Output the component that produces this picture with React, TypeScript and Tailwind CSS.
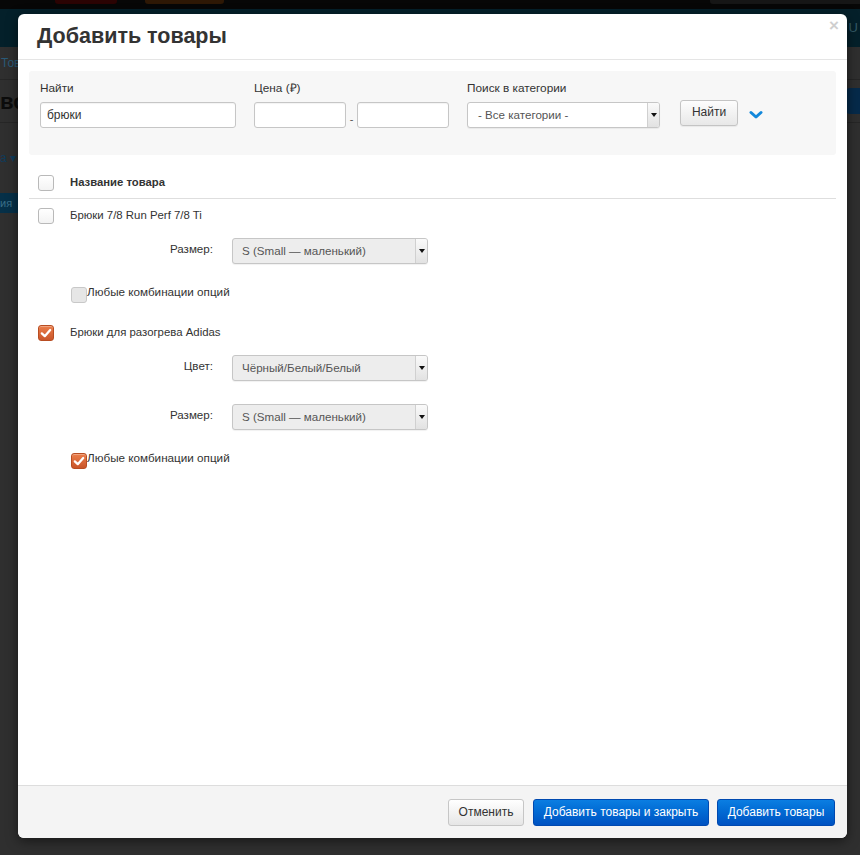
import React from 'react'

const font = { fontFamily: '"Liberation Sans", Arial, sans-serif' }

function Box({ checked, disabled }: { checked?: boolean; disabled?: boolean }) {
  if (checked) {
    return (
      <span className="flex h-4 w-4 shrink-0 items-center justify-center rounded-[3px] border border-[#b84d22] bg-gradient-to-b from-[#ec7e4a] to-[#c9552a] shadow-[inset_0_1px_0_rgba(255,255,255,0.3)]">
        <svg width="14" height="14" viewBox="0 0 16 16">
          <polyline points="3.2 8.4 6.6 11.6 12.8 4.6" fill="none" stroke="#fff" strokeWidth="2.6" strokeLinecap="round" strokeLinejoin="round" />
        </svg>
      </span>
    )
  }
  return (
    <span
      className={`block h-4 w-4 shrink-0 rounded-[3px] border ${
        disabled ? 'border-[#c8c8c8] bg-[#e6e6e6]' : 'border-[#b9b9b9] bg-gradient-to-b from-white to-[#f3f3f3]'
      }`}
    />
  )
}

function Caret() {
  return <span className="block h-0 w-0 border-x-[3.5px] border-t-[4px] border-x-transparent border-t-[#111]" />
}

function Select({ value, w, light }: { value: string; w: string; light?: boolean }) {
  return (
    <div
      className={`flex h-[26px] items-stretch overflow-hidden rounded-[3px] border border-[#c6c6c6] ${w} ${
        light ? 'bg-white' : 'bg-[#ededed]'
      } shadow-[0_1px_1px_rgba(0,0,0,0.06)]`}
    >
      <span className={`flex flex-1 items-center text-[11.6px] text-[#555] ${light ? 'pl-[10px]' : 'pl-[9px]'}`}>{value}</span>
      <span className="flex w-[12px] items-center justify-center border-l border-[#d0d0d0] bg-gradient-to-b from-[#fafafa] to-[#e2e2e2]">
        <Caret />
      </span>
    </div>
  )
}

function Input({ value, w }: { value?: string; w: string }) {
  return (
    <div className={`flex h-[26px] items-center rounded-[3px] border border-[#c6c6c6] bg-white pl-[6px] text-[12px] text-[#333] shadow-[inset_0_1px_1px_rgba(0,0,0,0.05)] ${w}`}>
      {value}
    </div>
  )
}

function OptionRow({ label, value }: { label: string; value: string }) {
  return (
    <div className="flex items-start">
      <span className="w-[175px] pt-[2px] text-right text-[11.6px] text-[#333]">{label}</span>
      <div className="ml-[19px]">
        <Select value={value} w="w-[196px]" />
      </div>
    </div>
  )
}

function Product({
  name,
  checked,
  options,
}: {
  name: string
  checked?: boolean
  options: { label: string; value: string }[]
}) {
  return (
    <div className="flex flex-col">
      <div className="flex h-4 items-center">
        <span className="w-[32px]">
          <Box checked={checked} />
        </span>
        <span className="text-[11.4px] text-[#333]">{name}</span>
      </div>
      <div className="mt-[14px] flex flex-col gap-[23px]">
        {options.map((o) => (
          <OptionRow key={o.label + o.value} label={o.label} value={o.value} />
        ))}
      </div>
      <div className="mt-[23px] flex items-start pl-[33px]">
        <Box checked={checked} disabled={!checked} />
        <span className="-mt-[3px] text-[11.7px] leading-[16px] text-[#333]">Любые комбинации опций</span>
      </div>
    </div>
  )
}

export default function App() {
  return (
    <div className="relative h-[855px] w-[860px] overflow-hidden bg-[#2f2f2f]" style={font}>
      {/* dimmed page behind the modal */}
      <div className="flex h-[9px] items-start bg-[#070707]">
        <span className="ml-[55px] h-[4px] w-[62px] rounded-b-[3px] bg-[#2b0303]" />
        <span className="ml-[28px] h-[4px] w-[79px] rounded-b-[3px] bg-[#2e1805]" />
        <span className="ml-auto h-[4px] w-[150px] rounded-bl-[3px] bg-[#161616]" />
      </div>
      <div className="flex h-[38px] items-center justify-end bg-[#04202a] pr-[2px] text-[13px] text-[#335a66]">U</div>
      <div className="flex h-[33px] items-center border-b border-[#262626] pl-[1px] text-[12px] text-[#2a5a78]">Тов</div>
      <div className="flex h-[43px] items-center justify-between border-b border-[#262626] text-[22px] font-bold text-[#0c0c0c]">
        <span>во</span>
        <span className="h-[26px] w-[14px] rounded-l-[4px] bg-[#062a4a]" />
      </div>
      <div className="flex h-[70px] items-center text-[12px] text-[#0f3b5a]">а ▾</div>
      <div className="flex h-[20px] w-[18px] items-center bg-[#063048] text-[11px] text-[#3a6f88]">ия</div>

      <div className="absolute left-[18px] top-[14px] flex h-[824px] w-[829px] flex-col rounded-[6px] bg-white shadow-[0_3px_12px_rgba(0,0,0,0.5)]">
        {/* header */}
        <div className="relative flex h-[46px] shrink-0 items-center border-b border-[#e5e5e5] pl-[19px]">
          <h1 className="text-[21.5px] font-bold leading-none text-[#333]">Добавить товары</h1>
          <span className="absolute right-[8px] top-[3px] text-[17px] font-bold leading-none text-[#cfcfcf]">×</span>
        </div>

        {/* body */}
        <div className="flex flex-1 flex-col px-[11px] pt-[11px]">
          <div className="flex h-[84px] items-start gap-[18px] rounded-[3px] bg-[#f7f7f7] pl-[11px] pt-[9px]">
            <div className="flex flex-col">
              <span className="mb-[6px] text-[11.8px] leading-[16px] text-[#333]">Найти</span>
              <Input value="брюки" w="w-[196px]" />
            </div>
            <div className="flex flex-col">
              <span className="mb-[6px] text-[11.8px] leading-[16px] text-[#333]">Цена (₽)</span>
              <div className="flex items-end">
                <Input w="w-[92px]" />
                <span className="w-[11px] pb-[3px] text-center text-[11px] leading-none text-[#555]">-</span>
                <Input w="w-[92px]" />
              </div>
            </div>
            <div className="flex flex-col">
              <span className="mb-[6px] text-[11.8px] leading-[16px] text-[#333]">Поиск в категории</span>
              <Select value="- Все категории -" w="w-[193px]" light />
            </div>
            <div className="ml-[2px] mt-[20px] flex items-center">
              <span className="flex h-[26px] w-[58px] items-center justify-center rounded-[3px] border border-[#c4c4c4] bg-gradient-to-b from-[#fdfdfd] to-[#e8e8e8] pb-[2px] text-[12px] text-[#333] shadow-[0_1px_1px_rgba(0,0,0,0.06)]">
                Найти
              </span>
              <svg className="ml-[11px] mt-[3px]" width="14" height="10" viewBox="0 0 14 10">
                <polyline points="2 2.5 7 7 12 2.5" fill="none" stroke="#1288db" strokeWidth="3" strokeLinecap="round" strokeLinejoin="round" />
              </svg>
            </div>
          </div>

          {/* table header */}
          <div className="flex h-[44px] items-center border-b border-[#dedede] pl-[9px] pt-[12px]">
            <span className="w-[32px]">
              <Box />
            </span>
            <span className="text-[11.3px] font-bold text-[#333]">Название товара</span>
          </div>

          <div className="flex flex-col gap-[22px] pl-[9px] pt-[9px]">
            <Product name="Брюки 7/8 Run Perf 7/8 Ti" options={[{ label: 'Размер:', value: 'S (Small — маленький)' }]} />
            <Product
              name="Брюки для разогрева Adidas"
              checked
              options={[
                { label: 'Цвет:', value: 'Чёрный/Белый/Белый' },
                { label: 'Размер:', value: 'S (Small — маленький)' },
              ]}
            />
          </div>
        </div>

        {/* footer */}
        <div className="flex h-[53px] shrink-0 items-center justify-end gap-[8px] rounded-b-[6px] border-t border-[#dddddd] bg-[#f4f4f4] pr-[12px]">
          <span className="mr-[1px] flex h-[27px] w-[76px] items-center justify-center rounded-[3px] border border-[#c6c6c6] bg-gradient-to-b from-white to-[#e6e6e6] text-[12px] text-[#333]">
            Отменить
          </span>
          <span className="flex h-[27px] w-[176px] items-center justify-center rounded-[3px] border border-[#0049b0] bg-gradient-to-b from-[#0b7ee2] to-[#0052c2] text-[12px] text-white">
            Добавить товары и закрыть
          </span>
          <span className="flex h-[27px] w-[118px] items-center justify-center rounded-[3px] border border-[#0049b0] bg-gradient-to-b from-[#0b7ee2] to-[#0052c2] text-[12px] text-white">
            Добавить товары
          </span>
        </div>
      </div>
    </div>
  )
}
